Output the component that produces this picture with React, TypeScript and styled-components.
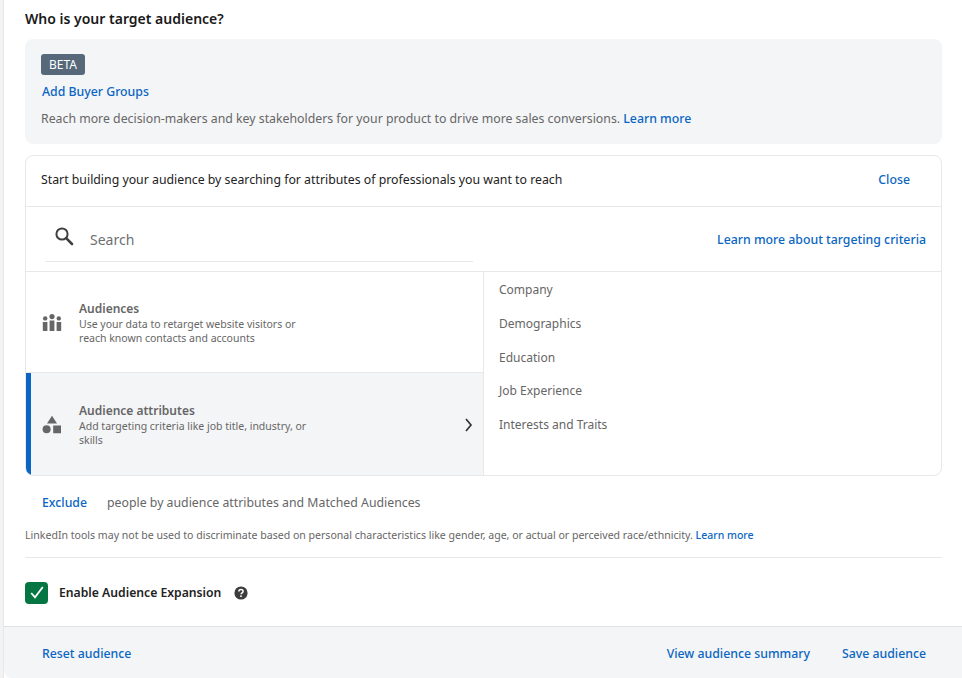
import React from 'react';
import styled, { createGlobalStyle } from 'styled-components';

const blue = '#0a66c2';
const line = '#e8e8e8';
const panelGrey = '#f4f5f7';

const GlobalStyle = createGlobalStyle`
  html, body {
    margin: 0;
    padding: 0;
    background: #f3f3f3;
  }
  body {
    font-family: "Noto Sans", "Open Sans", sans-serif;
    font-size: 12.3px;
    color: #1f1f1f;
  }
`;

const Page = styled.div`
  width: 959px;
  height: 678px;
  margin-left: 3px;
  background: #fff;
  border-left: 1px solid ${line};
  box-sizing: border-box;
  display: flex;
  flex-direction: column;
  overflow: hidden;
`;

const Body = styled.div`
  flex: 1;
  padding: 0 20px 0 21px;
`;

const Heading = styled.h2`
  margin: 0;
  height: 39px;
  line-height: 37px;
  font-size: 14px;
  font-weight: 600;
  color: #191919;
`;

const BuyerBox = styled.section`
  height: 105px;
  box-sizing: border-box;
  padding: 15px 16px 0;
  background: ${panelGrey};
  border-radius: 8px;
`;

const Badge = styled.span`
  display: inline-block;
  height: 21px;
  line-height: 21px;
  padding: 0 8px;
  border-radius: 3px;
  background: #56687a;
  color: #fff;
  font-size: 12px;
`;

const Link = styled.a<{ $size?: number }>`
  color: ${blue};
  font-weight: 500;
  font-size: ${({ $size }) => $size ?? 12.3}px;
  white-space: nowrap;
`;

const BuyerLink = styled.div`
  margin: 7px 0 0 1px;
  line-height: 20px;
`;

const Muted = styled.p`
  margin: 7px 0 0;
  line-height: 20px;
  color: #666;
  white-space: nowrap;
`;

const Builder = styled.section`
  margin-top: 11px;
  height: 321px;
  box-sizing: border-box;
  border: 1px solid ${line};
  border-radius: 8px;
  overflow: hidden;
  display: flex;
  flex-direction: column;
`;

const BuilderHead = styled.div`
  height: 51px;
  flex: none;
  box-sizing: border-box;
  padding: 0 31px 4px 15px;
  border-bottom: 1px solid ${line};
  display: flex;
  align-items: center;
  justify-content: space-between;
  color: #222;
`;

const SearchRow = styled.div`
  height: 65px;
  flex: none;
  box-sizing: border-box;
  padding: 0 15px 0 19px;
  border-bottom: 1px solid ${line};
  display: flex;
  align-items: flex-start;
  justify-content: space-between;
`;

const SearchField = styled.div`
  width: 428px;
  height: 55px;
  box-sizing: border-box;
  padding: 10px 0 0 9px;
  border-bottom: 1px solid ${line};
  display: flex;
  align-items: center;
  gap: 16px;
  color: #6f6f6f;
  font-size: 14px;
`;

const SearchGlyph = styled.svg`
  width: 20px;
  height: 20px;
  margin-top: -6px;
  flex: none;
`;

const CriteriaLink = styled(Link)`
  margin-top: 24px;
  line-height: 18px;
`;

const Columns = styled.div`
  flex: 1;
  display: grid;
  grid-template-columns: 458px 1fr;
  min-height: 0;
`;

const Categories = styled.div`
  border-right: 1px solid ${line};
  display: flex;
  flex-direction: column;
`;

const Category = styled.div<{ $active?: boolean }>`
  flex: ${({ $active }) => ($active ? '0 0 103px' : '0 0 101px')};
  box-sizing: border-box;
  display: flex;
  align-items: center;
  padding: ${({ $active }) => ($active ? '0 0 0 11px' : '2px 0 0 16px')};
  border-left: ${({ $active }) => ($active ? `5px solid ${blue}` : 'none')};
  border-bottom: ${({ $active }) => ($active ? 'none' : `1px solid ${line}`)};
  background: ${({ $active }) => ($active ? panelGrey : '#fff')};
  position: relative;
`;

const CategoryIcon = styled.svg`
  width: 20px;
  height: 20px;
  flex: none;
  fill: #666;
`;

const CategoryText = styled.div`
  margin-left: 17px;
  width: 240px;
  color: #666;
`;

const CategoryTitle = styled.div`
  font-size: 12px;
  font-weight: 600;
  line-height: 16px;
`;

const CategoryDesc = styled.div`
  font-size: 10.5px;
  line-height: 14px;
`;

const Chevron = styled.svg`
  position: absolute;
  right: 10px;
  top: 45px;
  width: 9px;
  height: 14px;
  fill: none;
  stroke: #333;
  stroke-width: 1.7;
`;

const AttributeList = styled.ul`
  list-style: none;
  margin: 0;
  padding: 9px 0 0 15px;
`;

const Attribute = styled.li`
  height: 33.8px;
  line-height: 17px;
  font-size: 12px;
  color: #666;
`;

const ExcludeRow = styled.div`
  margin-top: 17px;
  padding-left: 17px;
  line-height: 20px;
  display: flex;
  gap: 20px;
  color: #666;
`;

const Disclaimer = styled.p`
  margin: 14px 0 0;
  padding-bottom: 14px;
  line-height: 16px;
  font-size: 10.57px;
  color: #666;
  border-bottom: 1px solid ${line};
  white-space: nowrap;
`;

const ExpansionRow = styled.div`
  margin-top: 23px;
  height: 23px;
  display: flex;
  align-items: center;
  font-size: 12.2px;
  font-weight: 600;
  color: #222;
`;

const CheckBox = styled.span`
  width: 23px;
  height: 22px;
  border-radius: 4px;
  background: #057642;
  display: flex;
  align-items: center;
  justify-content: center;
  margin-right: 11px;
`;

const HelpIcon = styled.svg`
  width: 14px;
  height: 14px;
  margin-left: 13px;
`;

const Footer = styled.footer`
  height: 52px;
  flex: none;
  box-sizing: border-box;
  padding: 2px 36px 0 38px;
  background: ${panelGrey};
  border-top: 1px solid #e0e2e6;
  border-bottom-left-radius: 8px;
  display: flex;
  align-items: center;
  justify-content: space-between;
`;

const FooterActions = styled.div`
  display: flex;
  gap: 32px;
`;

const attributes = ['Company', 'Demographics', 'Education', 'Job Experience', 'Interests and Traits'];

export default function App() {
  return (
    <>
      <GlobalStyle />
      <Page>
        <Body>
          <Heading>Who is your target audience?</Heading>
          <BuyerBox>
            <Badge>BETA</Badge>
            <BuyerLink><Link>Add Buyer Groups</Link></BuyerLink>
            <Muted>
              Reach more decision-makers and key stakeholders for your product to drive more sales conversions. <Link>Learn more</Link>
            </Muted>
          </BuyerBox>
          <Builder>
            <BuilderHead>
              <span>Start building your audience by searching for attributes of professionals you want to reach</span>
              <Link>Close</Link>
            </BuilderHead>
            <SearchRow>
              <SearchField>
                <SearchGlyph viewBox="0 0 20 20" fill="none" stroke="#404040">
                  <circle cx="8" cy="8" r="5.6" strokeWidth="2" />
                  <path d="M12.2 12.2 L18 18" strokeWidth="2.6" strokeLinecap="round" />
                </SearchGlyph>
                <span>Search</span>
              </SearchField>
              <CriteriaLink>Learn more about targeting criteria</CriteriaLink>
            </SearchRow>
            <Columns>
              <Categories>
                <Category>
                  <CategoryIcon viewBox="0 0 20 20">
                    <circle cx="10" cy="3.6" r="2.6" />
                    <circle cx="3.2" cy="5.4" r="2.2" />
                    <circle cx="16.8" cy="5.4" r="2.2" />
                    <path d="M7.6 7.5h4.8v10.5H7.6zM.8 9h4.6v9H1.6a.8.8 0 0 1-.8-.8zM14.6 9h4.6v8.2a.8.8 0 0 1-.8.8h-3.8z" />
                  </CategoryIcon>
                  <CategoryText>
                    <CategoryTitle>Audiences</CategoryTitle>
                    <CategoryDesc>Use your data to retarget website visitors or reach known contacts and accounts</CategoryDesc>
                  </CategoryText>
                </Category>
                <Category $active>
                  <CategoryIcon viewBox="0 0 20 20">
                    <path d="M10 .8 15 8.6H5z" />
                    <circle cx="4.6" cy="14.2" r="4" />
                    <path d="M11.2 10.4h7.8v7.8h-7.8z" />
                  </CategoryIcon>
                  <CategoryText>
                    <CategoryTitle>Audience attributes</CategoryTitle>
                    <CategoryDesc>Add targeting criteria like job title, industry, or skills</CategoryDesc>
                  </CategoryText>
                  <Chevron viewBox="0 0 9 14"><path d="M2 1l5 6-5 6" /></Chevron>
                </Category>
              </Categories>
              <AttributeList>
                {attributes.map((name) => (
                  <Attribute key={name}>{name}</Attribute>
                ))}
              </AttributeList>
            </Columns>
          </Builder>
          <ExcludeRow>
            <Link>Exclude</Link>
            <span>people by audience attributes and Matched Audiences</span>
          </ExcludeRow>
          <Disclaimer>
            LinkedIn tools may not be used to discriminate based on personal characteristics like gender, age, or actual or perceived race/ethnicity. <Link $size={10.5}>Learn more</Link>
          </Disclaimer>
          <ExpansionRow>
            <CheckBox>
              <svg width="14" height="13" viewBox="0 0 14 13" fill="none" stroke="#fff" strokeWidth="1.8">
                <path d="M1.2 7l3.8 4.4L12.8 1" />
              </svg>
            </CheckBox>
            Enable Audience Expansion
            <HelpIcon viewBox="0 0 14 14">
              <circle cx="7" cy="7" r="6.6" fill="#3d3d3d" />
              <path d="M4.9 5.4c0-1.3 1-2 2.1-2s2.1.7 2.1 1.9c0 1.6-2 1.5-2 3" fill="none" stroke="#fff" strokeWidth="1.5" />
              <rect x="6.2" y="9.4" width="1.6" height="1.6" fill="#fff" />
            </HelpIcon>
          </ExpansionRow>
        </Body>
        <Footer>
          <Link>Reset audience</Link>
          <FooterActions>
            <Link>View audience summary</Link>
            <Link>Save audience</Link>
          </FooterActions>
        </Footer>
      </Page>
    </>
  );
}
